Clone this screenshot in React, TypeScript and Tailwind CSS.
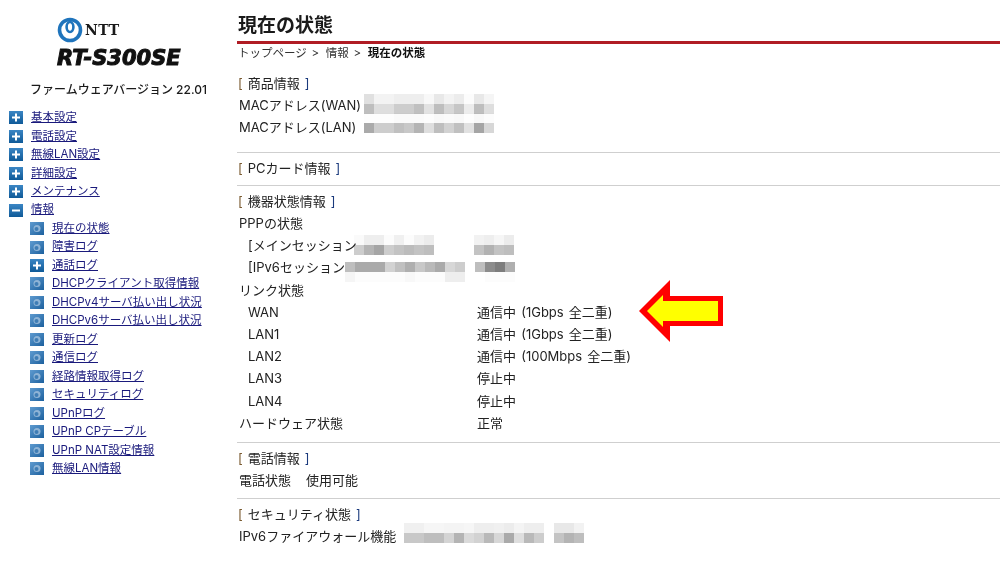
const font = { fontFamily: 'Inter, "Noto Sans CJK JP", "Noto Sans", sans-serif' };

const menuTop = ["基本設定", "電話設定", "無線LAN設定", "詳細設定", "メンテナンス"];
const subMenu = [
  { label: "現在の状態", icon: "dot" },
  { label: "障害ログ", icon: "dot" },
  { label: "通話ログ", icon: "plus" },
  { label: "DHCPクライアント取得情報", icon: "dot" },
  { label: "DHCPv4サーバ払い出し状況", icon: "dot" },
  { label: "DHCPv6サーバ払い出し状況", icon: "dot" },
  { label: "更新ログ", icon: "dot" },
  { label: "通信ログ", icon: "dot" },
  { label: "経路情報取得ログ", icon: "dot" },
  { label: "セキュリティログ", icon: "dot" },
  { label: "UPnPログ", icon: "dot" },
  { label: "UPnP CPテーブル", icon: "dot" },
  { label: "UPnP NAT設定情報", icon: "dot" },
  { label: "無線LAN情報", icon: "dot" },
];

const SquareIcon = ({ type }: { type: string }) => (
  <svg width="14" height="13" viewBox="0 0 14 13" className="shrink-0">
    <defs>
      <linearGradient id="sq" x1="0" y1="0" x2="0" y2="1">
        <stop offset="0" stopColor="#3b86c4" />
        <stop offset="1" stopColor="#0f5a98" />
      </linearGradient>
    </defs>
    <rect width="14" height="13" fill="url(#sq)" />
    <rect x="3" y="5.5" width="8" height="2" fill="#fff" />
    {type === "plus" && <rect x="6" y="2.5" width="2" height="8" fill="#fff" />}
  </svg>
);

const DotIcon = () => (
  <svg width="14" height="13" viewBox="0 0 14 13" className="shrink-0">
    <defs>
      <linearGradient id="dt" x1="0" y1="0" x2="1" y2="1">
        <stop offset="0" stopColor="#5f9bd0" />
        <stop offset="1" stopColor="#1c609e" />
      </linearGradient>
    </defs>
    <rect width="14" height="13" fill="url(#dt)" />
    <circle cx="7" cy="6.5" r="3.5" fill="#8fb4d6" />
    <circle cx="6.5" cy="7" r="2" fill="#3f7db5" />
  </svg>
);

const Logo = () => (
  <div className="flex flex-col items-start ml-[57px]">
    <div className="flex items-center h-[26px]">
      <svg width="26" height="26" viewBox="0 0 26 26">
        <circle cx="13" cy="13" r="10.5" fill="none" stroke="#1f74bc" strokeWidth="3.6" />
        <ellipse cx="13" cy="10" rx="3.4" ry="5" fill="none" stroke="#1f74bc" strokeWidth="2.6" />
      </svg>
      <span
        className="ml-[2px] text-[14px] font-bold leading-none text-[#1a1a1a] tracking-[0.5px]"
        style={{ fontFamily: '"DejaVu Serif", serif' }}
      >
        NTT
      </span>
    </div>
    <span
      className="mt-[6px] h-[19px] text-[21px] font-bold italic leading-[19px] text-[#111] whitespace-nowrap [-webkit-text-stroke:1px_#111]"
      style={{ fontFamily: '"DejaVu Sans", sans-serif' }}
    >
      RT-S300SE
    </span>
  </div>
);

const Sidebar = () => (
  <aside className="w-[237px] shrink-0 pt-[17px]">
    <Logo />
    <div className="mt-[13px] ml-[30px] text-[12px] leading-[18px] font-medium text-[#1a1a1a] whitespace-nowrap">
      ファームウェアバージョン 22.01
    </div>
    <nav className="mt-[9.5px] ml-[9px] flex flex-col text-[11.5px] text-[#1a1a7c]">
      {menuTop.map((m) => (
        <div key={m} className="flex items-center gap-[8px] h-[18.47px]">
          <SquareIcon type="plus" />
          <span className="underline whitespace-nowrap">{m}</span>
        </div>
      ))}
      <div className="flex items-center gap-[8px] h-[18.47px]">
        <SquareIcon type="minus" />
        <span className="underline whitespace-nowrap">情報</span>
      </div>
      {subMenu.map((m) => (
        <div key={m.label} className="flex items-center gap-[8px] h-[18.47px] ml-[21px]">
          {m.icon === "plus" ? <SquareIcon type="plus" /> : <DotIcon />}
          <span className="underline whitespace-nowrap">{m.label}</span>
        </div>
      ))}
    </nav>
  </aside>
);

// pixelated parts of the screenshot, one grey level per 10px cell
const Mosaic = ({ rows, className }: { rows: number[][]; className?: string }) => (
  <div className={`flex flex-col mix-blend-multiply ${className ?? ""}`}>
    {rows.map((row, y) => (
      <div key={y} className="flex">
        {row.map((g, x) => (
          <div
            key={x}
            className="w-[10px] h-[10px]"
            style={{ backgroundColor: `rgb(${g},${g},${g})` }}
          />
        ))}
      </div>
    ))}
  </div>
);

const SectionTitle = ({ children }: { children: string }) => (
  <div className="h-[21px] leading-[21px] pl-[1px] whitespace-nowrap">
    <span className="text-[#7a5a30]">[</span>
    <span className="ml-[5px]">{children}</span>
    <span className="ml-[5px] text-[#1a3a7c]">]</span>
  </div>
);

const Row = ({ children, className }: { children: React.ReactNode; className?: string }) => (
  <div className={`h-[22.2px] leading-[22.2px] flex items-center whitespace-nowrap ${className ?? ""}`}>
    {children}
  </div>
);

const StatusRow = ({ label, value, indent }: { label: string; value: string; indent?: boolean }) => (
  <Row>
    <span className={indent ? "w-[240px] pl-[11px]" : "w-[240px] pl-[2px]"}>{label}</span>
    <span className="[word-spacing:1.5px]">{value}</span>
  </Row>
);

const Arrow = () => (
  <svg width="90" height="66" viewBox="0 0 90 66" className="absolute left-[400px] top-[277px]">
    <polygon points="2,34 33,3 33,19 86,19 86,49 33,49 33,65" fill="#ff0000" />
    <polygon points="10,34 26,18 26,24 81,24 81,44 26,44 26,50" fill="#ffff00" />
  </svg>
);

const Main = () => (
  <main className="relative flex-1 text-[13px] text-[#222]">
    <h1 className="h-[41px] pt-[12px] pl-[1px] text-[19px] leading-[28px] font-bold text-[#1a1a1a]">
      現在の状態
    </h1>
    <div className="h-[3px] bg-[#b01c24]" />
    <div className="h-[16px] mt-[1px] text-[11.5px] leading-[16px] text-[#333] pl-[1px] whitespace-nowrap flex">
      <span>トップページ</span>
      <span className="w-[9px] ml-[4px] mr-[6px] text-center">&gt;</span>
      <span>情報</span>
      <span className="w-[9px] ml-[4px] mr-[6px] text-center">&gt;</span>
      <span className="font-bold text-[#111]">現在の状態</span>
    </div>

    <section className="mt-[12px] h-[79px]">
      <SectionTitle>商品情報</SectionTitle>
      <Row className="relative pl-[2px]">
        MACアドレス(WAN)
        <Mosaic
          className="absolute left-[127px] top-[0px]"
          rows={[
            [224, 243, 243, 238, 238, 238, 248, 232, 243, 236, 252, 232, 245],
            [190, 222, 222, 205, 205, 192, 226, 190, 215, 198, 236, 190, 222],
          ]}
        />
      </Row>
      <Row className="relative pl-[2px]">
        MACアドレス(LAN)
        <Mosaic
          className="absolute left-[127px] top-[-3px]"
          rows={[
            [253, 253, 253, 250, 250, 250, 252, 248, 250, 248, 253, 248, 252],
            [170, 205, 205, 192, 200, 180, 222, 190, 210, 192, 225, 165, 215],
          ]}
        />
      </Row>
    </section>

    <div className="h-px bg-[#cfcfcf]" />
    <section className="mt-[5px] h-[27px]">
      <SectionTitle>PCカード情報</SectionTitle>
    </section>
    <div className="h-px bg-[#cfcfcf]" />

    <section className="mt-[5px]">
      <SectionTitle>機器状態情報</SectionTitle>
      <Row className="pl-[2px]">PPPの状態</Row>
      <Row className="relative pl-[11px]">
        [メインセッション
        <Mosaic
          className="absolute left-[117px] top-[1px]"
          rows={[
            [250, 238, 238, 252, 240, 252, 242, 236, 255, 255, 255, 255, 242, 238, 246, 236],
            [205, 180, 165, 205, 195, 188, 195, 190, 255, 255, 255, 255, 195, 178, 195, 190],
          ]}
        />
      </Row>
      <Row className="relative pl-[11px]">
        [IPv6セッション
        <Mosaic
          className="absolute left-[108px] top-[6px]"
          rows={[
            [190, 170, 170, 170, 210, 192, 175, 200, 185, 170, 215, 205, 255, 190, 140, 125, 175],
            [245, 252, 252, 252, 252, 252, 248, 252, 252, 252, 238, 238, 255, 255, 252, 252, 252],
          ]}
        />
      </Row>
      <Row className="pl-[2px]">リンク状態</Row>
      <StatusRow indent label="WAN" value="通信中 (1Gbps 全二重)" />
      <StatusRow indent label="LAN1" value="通信中 (1Gbps 全二重)" />
      <StatusRow indent label="LAN2" value="通信中 (100Mbps 全二重)" />
      <StatusRow indent label="LAN3" value="停止中" />
      <StatusRow indent label="LAN4" value="停止中" />
      <StatusRow label="ハードウェア状態" value="正常" />
    </section>

    <div className="h-px bg-[#cfcfcf] mt-[8px]" />
    <section className="mt-[5px] h-[50px]">
      <SectionTitle>電話情報</SectionTitle>
      <Row className="pl-[2px]">
        <span>電話状態</span>
        <span className="ml-[15px]">使用可能</span>
      </Row>
    </section>
    <div className="h-px bg-[#cfcfcf]" />
    <section className="mt-[5px]">
      <SectionTitle>セキュリティ状態</SectionTitle>
      <Row className="relative pl-[2px]">
        IPv6ファイアウォール機能
        <Mosaic
          className="absolute left-[167px] top-[-2px]"
          rows={[
            [240, 240, 246, 246, 244, 244, 246, 238, 238, 240, 236, 244, 238, 238, 255, 232, 232, 242],
            [200, 200, 190, 190, 212, 180, 218, 210, 185, 215, 170, 222, 185, 205, 255, 196, 180, 190],
          ]}
        />
      </Row>
    </section>
    <Arrow />
  </main>
);

export default function App() {
  return (
    <div className="w-[1000px] h-[563px] overflow-hidden bg-white flex" style={font}>
      <Sidebar />
      <Main />
    </div>
  );
}
